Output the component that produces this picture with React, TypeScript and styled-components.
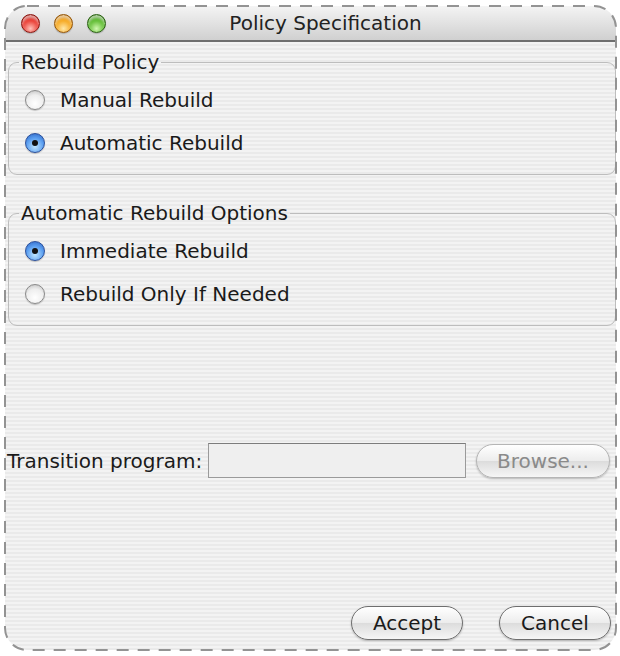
import React from 'react'
import styled, { createGlobalStyle } from 'styled-components'

const GlobalStyle = createGlobalStyle`
  body {
    margin: 0;
    background: #fff;
    font-family: "DejaVu Sans", "Liberation Sans", sans-serif;
  }
`

const App = () => (
  <>
    <GlobalStyle />
    <Frame>
      <Window>
        <TitleBar>
          <Lights>
            <Light color="red" />
            <Light color="amber" />
            <Light color="green" />
          </Lights>
          <Title>Policy Specification</Title>
        </TitleBar>
        <Body>
          <Group>
            <Legend>Rebuild Policy</Legend>
            <Option>
              <Radio />
              Manual Rebuild
            </Option>
            <Option>
              <Radio checked />
              Automatic Rebuild
            </Option>
          </Group>
          <Group>
            <Legend>Automatic Rebuild Options</Legend>
            <Option>
              <Radio checked />
              Immediate Rebuild
            </Option>
            <Option>
              <Radio />
              Rebuild Only If Needed
            </Option>
          </Group>
          <ProgramRow>
            <FieldLabel>Transition program:</FieldLabel>
            <TextField />
            <PillButton disabled>Browse...</PillButton>
          </ProgramRow>
          <Footer>
            <PillButton>Accept</PillButton>
            <PillButton>Cancel</PillButton>
          </Footer>
        </Body>
      </Window>
      <DashedEdge width="618" height="651">
        <rect x="5" y="6" width="611" height="644" rx="22" ry="22" fill="none" stroke="#939393" strokeWidth="2" strokeDasharray="12 9" />
      </DashedEdge>
    </Frame>
  </>
)

export default App

const Frame = styled.div`
  position: relative;
  width: 620px;
  height: 656px;
`

const Window = styled.div`
  position: relative;
  top: 6px;
  left: 5px;
  width: 611px;
  height: 644px;
  border-radius: 22px;
  overflow: hidden;
  display: flex;
  flex-direction: column;
  background: repeating-linear-gradient(#f3f3f3 0 2px, #eaeaea 2px 4px);
`

const DashedEdge = styled.svg`
  position: absolute;
  left: 0;
  top: 0;
  pointer-events: none;
`

const TitleBar = styled.div`
  height: 34px;
  display: flex;
  align-items: center;
  position: relative;
  background: linear-gradient(#f4f4f4, #d0d0d0);
  border-bottom: 2px solid #6f6f6f;
`

const lightColors: Record<string, [string, string, string]> = {
  red: ['#ffc0b8', '#e8342a', '#8a140e'],
  amber: ['#ffe7a8', '#f5a418', '#955506'],
  green: ['#d0f8b0', '#58b82a', '#286010'],
}

const Lights = styled.div`
  display: flex;
  gap: 14px;
  padding-left: 16px;
  position: relative;
  z-index: 1;
`

const Light = styled.span<{ color: string }>`
  width: 19px;
  height: 19px;
  box-sizing: border-box;
  border-radius: 50%;
  border: 1px solid ${p => lightColors[p.color][2]};
  background: radial-gradient(circle at 50% 80%, ${p => lightColors[p.color][0]} 0%, ${p => lightColors[p.color][1]} 55%, ${p => lightColors[p.color][2]} 100%);
  box-shadow: inset 0 3px 3px rgba(255, 255, 255, 0.6), 0 1px 1px rgba(0, 0, 0, 0.2);
`

const Title = styled.div`
  position: absolute;
  left: 30px;
  right: 0;
  text-align: center;
  font-size: 20px;
  color: #222;
`

const Body = styled.div`
  flex: 1;
  display: flex;
  flex-direction: column;
  padding: 8px 0 10px 1px;
`

const Group = styled.fieldset`
  margin: 0 0 26px 2px;
  padding: 11px 0 16px 16px;
  border: 1px solid #bdbdbd;
  border-radius: 9px;
  display: flex;
  flex-direction: column;
  gap: 13px;
`

const Legend = styled.legend`
  font-size: 20px;
  color: #1a1a1a;
  padding: 0 2px;
  margin-left: -6px;
`

const Option = styled.label`
  display: flex;
  align-items: center;
  gap: 15px;
  font-size: 20px;
  color: #1a1a1a;
  height: 30px;
`

const Radio = styled.span<{ checked?: boolean }>`
  width: 20px;
  height: 20px;
  border-radius: 50%;
  box-sizing: border-box;
  display: inline-flex;
  align-items: center;
  justify-content: center;
  border: 1px solid ${p => (p.checked ? '#2a4f9a' : '#8a8a8a')};
  background: ${p =>
    p.checked
      ? 'radial-gradient(circle at 50% 70%, #c0e6ff 0%, #5a9ef0 55%, #2a5fbf 100%)'
      : 'radial-gradient(circle at 50% 70%, #ffffff 0%, #eeeeee 55%, #b8b8b8 100%)'};
  box-shadow: 0 1px 1px rgba(0, 0, 0, 0.2);
  &::after {
    content: '';
    display: ${p => (p.checked ? 'block' : 'none')};
    width: 6px;
    height: 6px;
    border-radius: 50%;
    background: #111;
  }
`

const ProgramRow = styled.div`
  display: flex;
  align-items: center;
  margin-top: 91px;
  padding-left: 1px;
`

const FieldLabel = styled.span`
  font-size: 20px;
  color: #1a1a1a;
  width: 201px;
  white-space: nowrap;
`

const TextField = styled.div`
  width: 258px;
  height: 35px;
  box-sizing: border-box;
  border: 1px solid #9a9a9a;
  border-top-color: #7c7c7c;
  background: #efefef;
  margin-right: 10px;
`

const PillButton = styled.button`
  height: 34px;
  min-width: 112px;
  padding: 0 16px;
  border-radius: 17px;
  border: 1px solid ${p => (p.disabled ? '#b5b5b5' : '#6e6e6e')};
  background: linear-gradient(#ffffff, #ececec 50%, #dcdcdc 51%, #f6f6f6);
  font-family: "DejaVu Sans", "Liberation Sans", sans-serif;
  font-size: 20px;
  color: ${p => (p.disabled ? '#8a8a8a' : '#1a1a1a')};
  box-shadow: 0 1px 2px rgba(0, 0, 0, 0.25);
  &:disabled {
    width: 134px;
  }
`

const Footer = styled.div`
  margin-top: auto;
  display: flex;
  justify-content: flex-end;
  gap: 36px;
  padding-right: 5px;
`
